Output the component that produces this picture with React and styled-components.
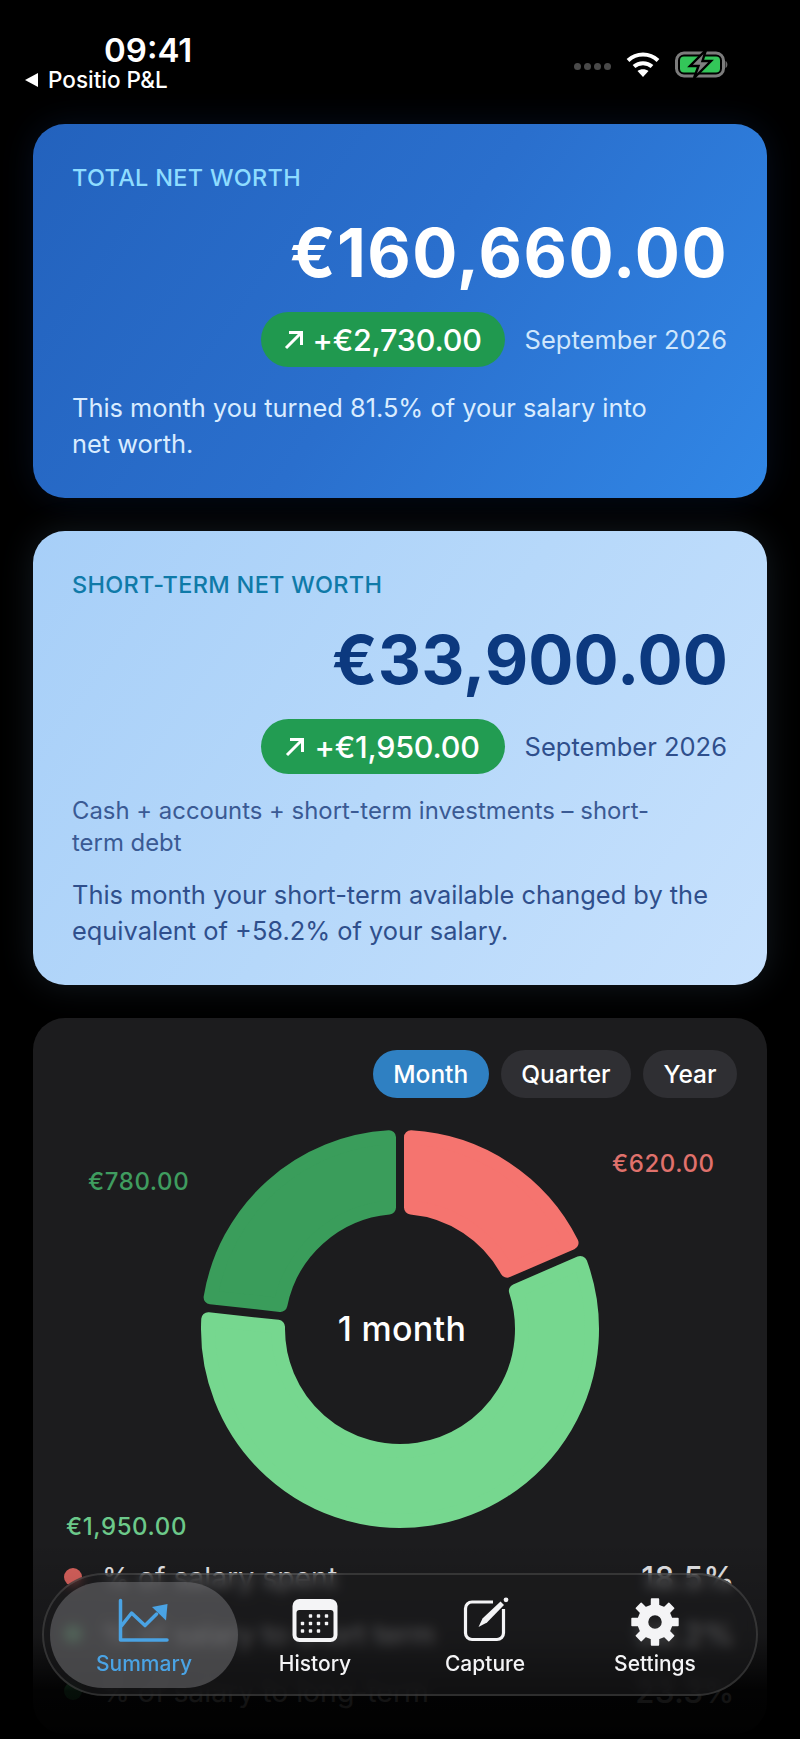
import styled, { createGlobalStyle } from "styled-components";

const GlobalStyle = createGlobalStyle`
  html, body {
    margin: 0;
    background: #000;
    font-family: Inter, "Noto Sans", "Liberation Sans", sans-serif;
  }
`;

const segments = [
  { from: 0, to: 66.6, color: "#f5746f" },
  { from: 66.6, to: 276.2, color: "#76d78f" },
  { from: 276.2, to: 360, color: "#3a9d5b" },
];

const legend = [
  { label: "% of salary spent", value: "18.5%", color: "#d9625d" },
  { label: "% of salary to short term", value: "58.2%", color: "#5fd47f" },
  { label: "% of salary to long-term", value: "23.3%", color: "#3a9d5b" },
];

const point = (radius, angle) => {
  const rad = (angle * Math.PI) / 180;
  return `${(200 + radius * Math.sin(rad)).toFixed(2)} ${(200 - radius * Math.cos(rad)).toFixed(2)}`;
};

// annular sector, inset so a round stroke gives the soft corners
function sectorPath(from, to) {
  const outer = 192;
  const inner = 122;
  const offset = 11;
  const deg = (r) => (Math.asin(offset / r) * 180) / Math.PI;
  const large = to - from > 180 ? 1 : 0;
  return [
    `M ${point(outer, from + deg(outer))}`,
    `A ${outer} ${outer} 0 ${large} 1 ${point(outer, to - deg(outer))}`,
    `L ${point(inner, to - deg(inner))}`,
    `A ${inner} ${inner} 0 ${large} 0 ${point(inner, from + deg(inner))}`,
    "Z",
  ].join(" ");
}

function gearPath() {
  const teeth = 8;
  const step = 360 / teeth;
  const at = (r, a) => {
    const rad = (a * Math.PI) / 180;
    return `${(24 + r * Math.sin(rad)).toFixed(2)} ${(24 - r * Math.cos(rad)).toFixed(2)}`;
  };
  let d = "";
  for (let i = 0; i < teeth; i++) {
    const a = i * step;
    d += `${i === 0 ? "M" : "L"} ${at(17, a - 12)} L ${at(23.2, a - 8.5)} L ${at(23.2, a + 8.5)} L ${at(17, a + 12)} `;
  }
  return `${d}Z M ${at(7.5, 0)} A 7.5 7.5 0 1 0 ${at(7.5, 180)} A 7.5 7.5 0 1 0 ${at(7.5, 0)} Z`;
}

export default function App() {
  return (
    <Screen>
      <GlobalStyle />
      <StatusBar>
        <StatusLeft>
          <Clock>09:41</Clock>
          <BackLink>
            <BackArrow />
            Positio P&amp;L
          </BackLink>
        </StatusLeft>
        <StatusRight>
          <SignalDots>
            <i />
            <i />
            <i />
            <i />
          </SignalDots>
          <WifiIcon />
          <BatteryIcon />
        </StatusRight>
      </StatusBar>

      <Cards>
        <WorthCard $tone="dark">
          <CardLabel $tone="dark">TOTAL NET WORTH</CardLabel>
          <Amount $tone="dark">€160,660.00</Amount>
          <ChangeRow>
            <ChangePill $tone="dark">
              <UpArrow />
              +€2,730.00
            </ChangePill>
            <Period $tone="dark">September 2026</Period>
          </ChangeRow>
          <Note $tone="dark" $width={590}>
            This month you turned 81.5% of your salary into net worth.
          </Note>
        </WorthCard>

        <WorthCard $tone="light">
          <CardLabel $tone="light">SHORT-TERM NET WORTH</CardLabel>
          <Amount $tone="light">€33,900.00</Amount>
          <ChangeRow>
            <ChangePill $tone="light">
              <UpArrow />
              +€1,950.00
            </ChangePill>
            <Period $tone="light">September 2026</Period>
          </ChangeRow>
          <Formula>Cash + accounts + short-term investments – short-term debt</Formula>
          <Note $tone="light" $width={656}>
            This month your short-term available changed by the equivalent of +58.2% of your salary.
          </Note>
        </WorthCard>

        <ChartCard>
          <RangeTabs>
            <RangeTab $active>Month</RangeTab>
            <RangeTab>Quarter</RangeTab>
            <RangeTab>Year</RangeTab>
          </RangeTabs>
          <ChartArea>
            <Donut viewBox="0 0 400 400">
              {segments.map((s) => (
                <path
                  key={s.from}
                  d={sectorPath(s.from, s.to)}
                  fill={s.color}
                  stroke={s.color}
                  strokeWidth="14"
                  strokeLinejoin="round"
                />
              ))}
            </Donut>
            <ChartCenter>1 month</ChartCenter>
            <ChartValue $color="#3f9c5f" $left={23} $top={39}>€780.00</ChartValue>
            <ChartValue $color="#e0716c" $left={547} $top={21}>€620.00</ChartValue>
            <ChartValue $color="#6cc98a" $left={1} $top={384}>€1,950.00</ChartValue>
          </ChartArea>
          <Legend>
            {legend.map((row) => (
              <LegendRow key={row.label}>
                <LegendDot $color={row.color} />
                <LegendLabel>{row.label}</LegendLabel>
                <LegendValue>{row.value}</LegendValue>
              </LegendRow>
            ))}
          </Legend>
        </ChartCard>
      </Cards>

      <BottomFade />

      <TabBar>
        <TabItem $active>
          <SummaryIcon />
          <TabLabel $active>Summary</TabLabel>
        </TabItem>
        <TabItem>
          <HistoryIcon />
          <TabLabel>History</TabLabel>
        </TabItem>
        <TabItem>
          <CaptureIcon />
          <TabLabel>Capture</TabLabel>
        </TabItem>
        <TabItem>
          <GearIcon />
          <TabLabel>Settings</TabLabel>
        </TabItem>
      </TabBar>
    </Screen>
  );
}

//Icons

function BackArrow() {
  return (
    <svg width="13" height="14" viewBox="0 0 13 14">
      <path d="M0 7 L13 0 V14 Z" fill="#fff" />
    </svg>
  );
}

function WifiIcon() {
  return (
    <svg width="34" height="26" viewBox="0 0 34 26" fill="none" stroke="#fff" strokeWidth="4">
      <path d="M2 9.5 C10.5 1.5 23.5 1.5 32 9.5" />
      <path d="M8 15.5 C13 11 21 11 26 15.5" />
      <path d="M11.5 20 L17 26 L22.5 20 C19.5 17.6 14.5 17.6 11.5 20 Z" fill="#fff" stroke="none" />
    </svg>
  );
}

function BatteryIcon() {
  return (
    <svg width="54" height="28" viewBox="0 0 54 28">
      <rect x="1.5" y="3" width="47" height="23" rx="7.5" fill="none" stroke="#7c7c7c" strokeWidth="3" />
      <rect x="5" y="6.5" width="40" height="16" rx="4" fill="#33c659" />
      <path d="M50.5 11 C53 12 53 17 50.5 18 Z" fill="#6a6a6a" />
      <path d="M31 0 L15 16 H23.500 L19 28 L36 11 H27.500 Z" fill="#808080" stroke="#000" strokeWidth="2.400" />
    </svg>
  );
}

function UpArrow() {
  return (
    <svg width="20" height="20" viewBox="0 0 20 20" fill="none" stroke="#fff" strokeWidth="3">
      <path d="M2 18 L17 3 M5 2.500 H17.500 V15" />
    </svg>
  );
}

function SummaryIcon() {
  return (
    <TabIcon viewBox="0 0 52 48" fill="none" stroke="#4aa3e4" strokeWidth="3.500" strokeLinecap="round" strokeLinejoin="round">
      <path d="M2.500 2.500 V42 H49" />
      <path d="M3.600 27.600 L13.600 15 L27 27.600 L38.600 16" />
      <path d="M34 9 L49.500 6 L48 22.600 Z" fill="#4aa3e4" stroke="none" />
    </TabIcon>
  );
}

function HistoryIcon() {
  const dots = [
    [21.5, 18], [29.5, 18], [37.5, 18],
    [13.5, 25.5], [21.5, 25.5], [29.5, 25.5], [37.5, 25.5],
    [13.5, 33], [21.5, 33], [29.5, 33],
  ];
  return (
    <TabIcon viewBox="0 0 52 48">
      <rect x="3.500" y="1" width="45" height="43" rx="7" fill="#f4f4f6" />
      <rect x="7.500" y="12" width="37" height="28" rx="3" fill="#1b1b1d" />
      {dots.map(([x, y]) => (
        <rect key={`${x}-${y}`} x={x - 1.7} y={y - 1.7} width="3.4" height="3.4" rx="0.8" fill="#f4f4f6" />
      ))}
    </TabIcon>
  );
}

function CaptureIcon() {
  return (
    <TabIcon viewBox="0 0 52 48" fill="none">
      <path d="M34 4 H13 A6.500 6.500 0 0 0 6.500 10.500 V35 A6.500 6.500 0 0 0 13 41.500 H38 A6.500 6.500 0 0 0 44.500 35 V11" stroke="#f4f4f6" strokeWidth="3.200" />
      <path d="M19.500 29 L23.500 20.500 L41.500 3.500 L45 7 L28 24.500 Z" fill="#f4f4f6" />
      <circle cx="47" cy="1.800" r="2.400" fill="#f4f4f6" />
    </TabIcon>
  );
}

function GearIcon() {
  return (
    <TabIcon viewBox="0 0 48 48">
      <path d={gearPath()} fill="#f4f4f6" fillRule="evenodd" stroke="#f4f4f6" strokeWidth="1.500" strokeLinejoin="round" />
    </TabIcon>
  );
}

//Styles

const Screen = styled.div`
  position: relative;
  width: 800px;
  height: 1739px;
  overflow: hidden;
  background: #000;
  color: #fff;
`;

const StatusBar = styled.div`
  display: flex;
  justify-content: space-between;
  height: 124px;
  padding: 32px 71px 0 25px;
  box-sizing: border-box;
`;

const StatusLeft = styled.div`
  display: flex;
  flex-direction: column;
`;

const Clock = styled.div`
  font-size: 33px;
  line-height: 36px;
  font-weight: 600;
  margin-left: 79px;
`;

const BackLink = styled.div`
  display: flex;
  align-items: center;
  gap: 10px;
  font-size: 22.5px;
  line-height: 24px;
  font-weight: 500;
`;

const StatusRight = styled.div`
  display: flex;
  align-items: center;
  gap: 15px;
  height: 28px;
  margin-top: 18px;
`;

const SignalDots = styled.div`
  display: flex;
  gap: 3px;
  margin-top: 4px;
  i {
    width: 7px;
    height: 7px;
    border-radius: 50%;
    background: #4a4a4a;
  }
`;

const Cards = styled.div`
  display: flex;
  flex-direction: column;
  gap: 33px;
  padding: 0 33px;
`;

const WorthCard = styled.div`
  display: flex;
  flex-direction: column;
  align-items: flex-end;
  padding: 41px 40px 36px 39px;
  border-radius: 32px;
  background: ${(p) =>
    p.$tone === "dark"
      ? "linear-gradient(125deg, #2362bd 0%, #2a6fcd 50%, #3187e6 100%)"
      : "linear-gradient(125deg, #a7cff8 0%, #b6d8fa 50%, #c7e1fd 100%)"};
  box-shadow: 0 0 34px ${(p) => (p.$tone === "dark" ? "rgba(35, 90, 180, 0.16)" : "rgba(150, 200, 250, 0.13)")};
`;

const CardLabel = styled.div`
  align-self: flex-start;
  font-size: 23.5px;
  line-height: 26px;
  font-weight: 500;
  letter-spacing: 0.3px;
  color: ${(p) => (p.$tone === "dark" ? "#8edcff" : "#0f7aa8")};
`;

const Amount = styled.div`
  margin: 22px -1px 0 0;
  font-size: 67px;
  line-height: 80px;
  font-weight: 700;
  letter-spacing: ${(p) => (p.$tone === "dark" ? "1.4px" : "0.1px")};
  color: ${(p) => (p.$tone === "dark" ? "#fff" : "#0c397f")};
`;

const ChangeRow = styled.div`
  display: flex;
  align-items: center;
  gap: 20px;
  margin-top: 19px;
`;

const ChangePill = styled.div`
  display: flex;
  align-items: center;
  justify-content: center;
  gap: 9px;
  width: 244px;
  height: 55px;
  border-radius: 28px;
  font-size: 30.5px;
  font-weight: 500;
  letter-spacing: -0.2px;
  color: #fff;
  background: ${(p) => (p.$tone === "dark" ? "#20994f" : "#229c52")};
`;

const Period = styled.div`
  font-size: 25.5px;
  color: ${(p) => (p.$tone === "dark" ? "#cfe6fc" : "#2f4f8c")};
`;

const Note = styled.p`
  align-self: flex-start;
  max-width: ${(p) => p.$width}px;
  margin: ${(p) => (p.$tone === "dark" ? "23px" : "18px")} 0 0;
  font-size: 25.4px;
  line-height: 36px;
  color: ${(p) => (p.$tone === "dark" ? "#d9ecff" : "#2f4f8c")};
`;

const Formula = styled.p`
  align-self: flex-start;
  max-width: 590px;
  margin: 21px 0 0;
  font-size: 23.9px;
  line-height: 32px;
  color: #3a5a94;
`;

const ChartCard = styled.div`
  height: 716px;
  padding: 32px 32px 0;
  box-sizing: border-box;
  border-radius: 32px;
  background: #1c1c1e;
`;

const RangeTabs = styled.div`
  display: flex;
  justify-content: flex-end;
  gap: 12px;
  margin-right: -2px;
`;

const RangeTab = styled.div`
  display: flex;
  align-items: center;
  height: 48px;
  padding: 0 20.5px;
  border-radius: 24px;
  font-size: 24.5px;
  font-weight: 500;
  color: #fff;
  background: ${(p) => (p.$active ? "#2f80c2" : "#2f2f33")};
`;

const ChartArea = styled.div`
  position: relative;
  display: flex;
  justify-content: center;
  margin-top: 31px;
  height: 400px;
`;

const Donut = styled.svg`
  display: block;
  width: 400px;
  height: 400px;
`;

const ChartCenter = styled.div`
  position: absolute;
  left: 4px;
  right: 0;
  top: 180px;
  text-align: center;
  font-size: 34px;
  line-height: 40px;
  font-weight: 500;
  letter-spacing: 0.3px;
`;

const ChartValue = styled.div`
  position: absolute;
  left: ${(p) => p.$left}px;
  top: ${(p) => p.$top}px;
  font-size: 24px;
  line-height: 28px;
  font-weight: 500;
  letter-spacing: 0.6px;
  color: ${(p) => p.$color};
`;

const Legend = styled.div`
  display: flex;
  flex-direction: column;
  gap: 27px;
  margin-top: 33px;
`;

const LegendRow = styled.div`
  display: flex;
  align-items: center;
  height: 30px;
`;

const LegendDot = styled.span`
  width: 18px;
  height: 18px;
  border-radius: 50%;
  margin: 0 20px 0 -1px;
  background: ${(p) => p.$color};
`;

const LegendLabel = styled.span`
  flex: 1;
  font-size: 28.4px;
  color: #e6e6e8;
`;

const LegendValue = styled.span`
  font-size: 31px;
  font-weight: 500;
  letter-spacing: 0.6px;
  color: #e6e6e8;
`;

const BottomFade = styled.div`
  position: absolute;
  left: 0;
  right: 0;
  bottom: 0;
  height: 200px;
  pointer-events: none;
  background: linear-gradient(
    to bottom,
    rgba(0, 0, 0, 0) 0%,
    rgba(0, 0, 0, 0.2) 48%,
    rgba(0, 0, 0, 0.9) 76%,
    rgba(0, 0, 0, 0.96) 100%
  );
`;

const TabBar = styled.div`
  position: absolute;
  left: 42px;
  right: 42px;
  bottom: 43px;
  display: flex;
  align-items: center;
  height: 123px;
  padding: 0 0 0 6px;
  box-sizing: border-box;
  border-radius: 62px;
  border: 2px solid rgba(255, 255, 255, 0.12);
  background: rgba(26, 26, 28, 0.6);
  backdrop-filter: blur(6px);
`;

const TabItem = styled.div`
  display: flex;
  flex-direction: column;
  align-items: center;
  justify-content: center;
  flex: ${(p) => (p.$active ? "0 0 188px" : "0 0 170px")};
  height: 106px;
  margin-right: ${(p) => (p.$active ? "-8px" : "0")};
  border-radius: 53px;
  background: ${(p) => (p.$active ? "rgba(120, 120, 124, 0.5)" : "transparent")};
`;

const TabIcon = styled.svg`
  width: 52px;
  height: 48px;
  margin: 5px 0 6px;
  overflow: visible;
`;

const TabLabel = styled.div`
  font-size: 21px;
  line-height: 24px;
  font-weight: 500;
  color: ${(p) => (p.$active ? "#4aa3e4" : "#f4f4f6")};
`;
